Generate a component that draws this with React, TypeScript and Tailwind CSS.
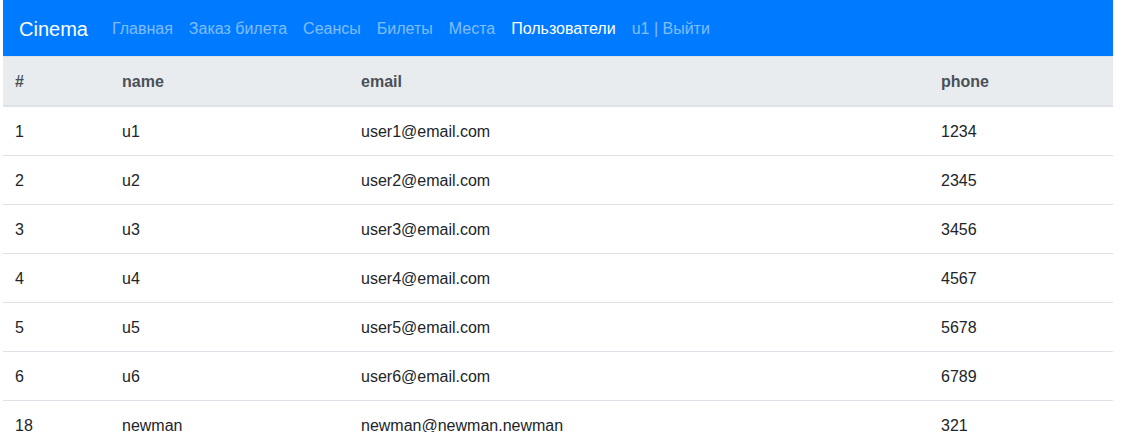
const links = [
  { label: 'Главная', active: false },
  { label: 'Заказ билета', active: false },
  { label: 'Сеансы', active: false },
  { label: 'Билеты', active: false },
  { label: 'Места', active: false },
  { label: 'Пользователи', active: true },
  { label: 'u1 | Выйти', active: false },
];

const users = [
  { id: 1, name: 'u1', email: 'user1@email.com', phone: '1234' },
  { id: 2, name: 'u2', email: 'user2@email.com', phone: '2345' },
  { id: 3, name: 'u3', email: 'user3@email.com', phone: '3456' },
  { id: 4, name: 'u4', email: 'user4@email.com', phone: '4567' },
  { id: 5, name: 'u5', email: 'user5@email.com', phone: '5678' },
  { id: 6, name: 'u6', email: 'user6@email.com', phone: '6789' },
  { id: 18, name: 'newman', email: 'newman@newman.newman', phone: '321' },
];

export default function App() {
  return (
    <div className="min-h-screen bg-white text-[#212529] font-['Liberation_Sans',Arial,sans-serif] text-base leading-6">
      <div className="ml-[3px] w-[1110px]">
        {/* Navbar */}
        <nav className="flex items-center h-14 px-4 py-2 bg-[#007bff]">
          <span className="mr-4 pt-[6px] pb-[4px] text-[20px] leading-[30px] text-white">Cinema</span>
          <ul className="flex items-center">
            {links.map((l) => (
              <li key={l.label}>
                <span className={`block px-2 pt-[9px] pb-[7px] ${l.active ? 'text-white' : 'text-white/50'}`}>{l.label}</span>
              </li>
            ))}
          </ul>
        </nav>

        {/* Users table */}
        <table className="w-full border-collapse">
          <thead>
            <tr className="bg-[#e9ecef] text-[#495057]">
              <th className="w-[107px] px-3 pt-[13px] pb-[11px] text-left font-bold border-t border-b-2 border-[#dee2e6]">#</th>
              <th className="w-[239px] px-3 pt-[13px] pb-[11px] text-left font-bold border-t border-b-2 border-[#dee2e6]">name</th>
              <th className="w-[580px] px-3 pt-[13px] pb-[11px] text-left font-bold border-t border-b-2 border-[#dee2e6]">email</th>
              <th className="px-3 pt-[13px] pb-[11px] text-left font-bold border-t border-b-2 border-[#dee2e6]">phone</th>
            </tr>
          </thead>
          <tbody>
            {users.map((u) => (
              <tr key={u.id}>
                <td className="px-3 pt-[13px] pb-[11px] border-t border-[#dee2e6]">{u.id}</td>
                <td className="px-3 pt-[13px] pb-[11px] border-t border-[#dee2e6]">{u.name}</td>
                <td className="px-3 pt-[13px] pb-[11px] border-t border-[#dee2e6]">{u.email}</td>
                <td className="px-3 pt-[13px] pb-[11px] border-t border-[#dee2e6]">{u.phone}</td>
              </tr>
            ))}
          </tbody>
        </table>
      </div>
    </div>
  );
}
